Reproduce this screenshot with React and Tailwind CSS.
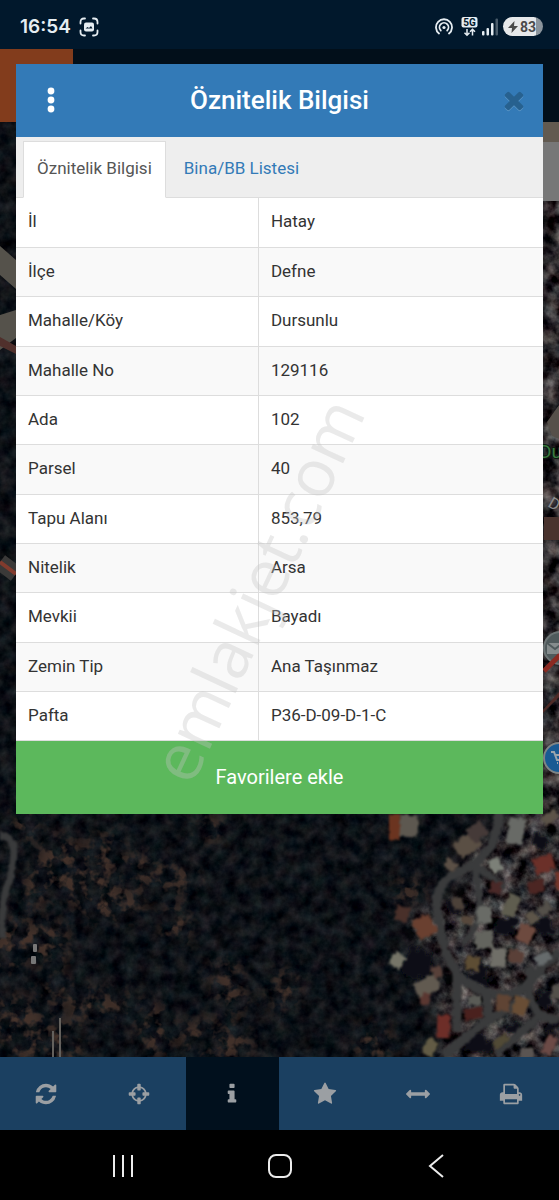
import React, { useState } from 'react';

const rows = [
  ['İl', 'Hatay'],
  ['İlçe', 'Defne'],
  ['Mahalle/Köy', 'Dursunlu'],
  ['Mahalle No', '129116'],
  ['Ada', '102'],
  ['Parsel', '40'],
  ['Tapu Alanı', '853,79'],
  ['Nitelik', 'Arsa'],
  ['Mevkii', 'Bayadı'],
  ['Zemin Tip', 'Ana Taşınmaz'],
  ['Pafta', 'P36-D-09-D-1-C'],
];

const tabs = ['Öznitelik Bilgisi', 'Bina/BB Listesi'];

const icons = {
  refresh: 'M1639 1056q0 5-1 7-64 268-268 434.5t-478 166.5q-146 0-282.5-55t-243.5-157l-129 129q-19 19-45 19t-45-19-19-45v-448q0-26 19-45t45-19h448q26 0 45 19t19 45-19 45l-137 137q71 66 161 102t187 36q134 0 250-65t186-179q11-17 53-117 8-23 30-23h192q13 0 22.5 9.5t9.5 22.5zm25-800v448q0 26-19 45t-45 19h-448q-26 0-45-19t-19-45 19-45l138-138q-148-137-349-137-134 0-250 65t-186 179q-11 17-53 117-8 23-30 23h-199q-13 0-22.5-9.5t-9.5-22.5v-7q65-268 270-434.5t480-166.5q146 0 284 55.5t245 156.5l130-129q19-19 45-19t45 19 19 45z',
  crosshairs: 'M1325 1024h-109q-26 0-45-19t-19-45v-128q0-26 19-45t45-19h109q-32-108-112.5-188.5t-188.5-112.5v109q0 26-19 45t-45 19h-128q-26 0-45-19t-19-45v-109q-108 32-188.5 112.5t-112.5 188.5h109q26 0 45 19t19 45v128q0 26-19 45t-45 19h-109q32 108 112.5 188.5t188.5 112.5v-109q0-26 19-45t45-19h128q26 0 45 19t19 45v109q108-32 188.5-112.5t112.5-188.5zm339-192v128q0 26-19 45t-45 19h-143q-37 161-154.5 278.5t-278.5 154.5v143q0 26-19 45t-45 19h-128q-26 0-45-19t-19-45v-143q-161-37-278.5-154.5t-154.5-278.5h-143q-26 0-45-19t-19-45v-128q0-26 19-45t45-19h143q37-161 154.5-278.5t278.5-154.5v-143q0-26 19-45t45-19h128q26 0 45 19t19 45v143q161 37 278.5 154.5t154.5 278.5h143q26 0 45 19t19 45z',
  info: 'M1216 1344v128q0 26-19 45t-45 19h-512q-26 0-45-19t-19-45v-128q0-26 19-45t45-19h64v-384h-64q-26 0-45-19t-19-45v-128q0-26 19-45t45-19h384q26 0 45 19t19 45v576h64q26 0 45 19t19 45zm-128-1152v192q0 26-19 45t-45 19h-256q-26 0-45-19t-19-45v-192q0-26 19-45t45-19h256q26 0 45 19t19 45z',
  star: 'M1728 647q0 22-26 48l-363 354 86 500q1 7 1 20 0 21-10.5 35.5t-30.5 14.5q-19 0-40-12l-449-236-449 236q-22 12-40 12-21 0-31.5-14.5t-10.5-35.5q0-6 2-20l86-500-364-354q-25-27-25-48 0-37 56-46l502-73 225-455q19-41 49-41t49 41l225 455 502 73q56 9 56 46z',
  arrows: 'M1792 896q0 26-19 45l-256 256q-19 19-45 19t-45-19-19-45v-128h-1024v128q0 26-19 45t-45 19-45-19l-256-256q-19-19-19-45t19-45l256-256q19-19 45-19t45 19 19 45v128h1024v-128q0-26 19-45t45-19 45 19l256 256q19 19 19 45z',
  print: 'M448 1536h896v-256h-896v256zm0-640h896v-384h-160q-40 0-68-28t-28-68v-160h-640v640zm1152 64q0-26-19-45t-45-19-45 19-19 45 19 45 45 19 45-19 19-45zm128 0v416q0 13-9.5 22.5t-22.5 9.5h-224v160q0 40-28 68t-68 28h-960q-40 0-68-28t-28-68v-160h-224q-13 0-22.5-9.5t-9.5-22.5v-416q0-79 56.5-135.5t135.5-56.5h64v-544q0-40 28-68t68-28h672q40 0 88 20t76 48l152 152q28 28 48 76t20 88v256h64q79 0 135.5 56.5t56.5 135.5z',
  close: 'M1490 1322q0 40-28 68l-136 136q-28 28-68 28t-68-28l-294-294-294 294q-28 28-68 28t-68-28l-136-136q-28-28-28-68t28-68l294-294-294-294q-28-28-28-68t28-68l136-136q28-28 68-28t68 28l294 294 294-294q28-28 68-28t68 28l136 136q28 28 28 68t-28 68l-294 294 294 294q28 28 28 68z',
};

const tools = [
  { icon: 'refresh', label: 'Yenile' },
  { icon: 'crosshairs', label: 'Konum' },
  { icon: 'info', label: 'Bilgi' },
  { icon: 'star', label: 'Favoriler' },
  { icon: 'arrows', label: 'Ölçüm' },
  { icon: 'print', label: 'Yazdır' },
];

const Icon = ({ name, className }) => (
  <svg viewBox="0 0 1792 1792" fill="currentColor" className={className} aria-hidden="true">
    <path d={icons[name]} />
  </svg>
);

// x, y, width, height, angle, colour
const houses = [
  [389, 814, 11, 26, 0, '#6b3420'], [400, 815, 18, 22, 4, '#5d5850'],
  [455, 836, 24, 18, -35, '#5a4f44'], [468, 824, 18, 16, -35, '#453a38'],
  [444, 860, 14, 10, 40, '#5b5046'], [508, 818, 16, 26, 8, '#686a66'],
  [490, 858, 11, 14, -30, '#7c8078'], [534, 856, 20, 16, -18, '#6b3029'],
  [528, 880, 16, 13, -15, '#4c2623'], [556, 872, 10, 18, 0, '#74352a'],
  [542, 812, 16, 10, -30, '#5c5348'], [505, 894, 13, 23, 22, '#5f5d4f'],
  [490, 882, 11, 12, 10, '#4a2928'], [477, 906, 15, 17, 0, '#696b66'],
  [475, 931, 18, 18, -6, '#63645e'], [491, 948, 15, 19, 4, '#706f68'],
  [415, 916, 19, 21, -25, '#6a4030'], [396, 906, 13, 15, 15, '#49302a'],
  [391, 953, 13, 15, 35, '#767568'], [518, 925, 15, 18, 22, '#6d4a3f'],
  [508, 950, 15, 12, 10, '#5a4038'], [535, 953, 16, 11, -35, '#666b6c'],
  [415, 978, 24, 16, -28, '#615a50'], [432, 966, 10, 12, -20, '#574039'],
  [421, 993, 9, 12, 14, '#5a3731'], [468, 996, 13, 9, 0, '#5a5b56'],
  [464, 1008, 18, 11, -10, '#4a211e'], [437, 1015, 13, 23, 3, '#6d2e28'],
  [424, 1039, 12, 17, 30, '#625b45'], [496, 995, 14, 16, 12, '#5f4434'],
  [513, 997, 14, 18, 20, '#684d35'], [493, 1037, 16, 8, -35, '#514a36'],
  [544, 1035, 11, 20, 24, '#6b4a46'], [521, 1048, 13, 10, 0, '#5b5552'],
  [538, 905, 14, 10, -40, '#54504a'], [552, 985, 11, 14, 10, '#54504a'],
  [527, 912, 10, 11, -30, '#5d5549'], [466, 956, 14, 14, 10, '#5d4d34'],
  [453, 898, 10, 12, -10, '#4c4139'], [461, 917, 12, 7, 8, '#57483c'],
];

const clearings = [
  [24, 824, 6, 7], [105, 848, 11, 7], [142, 868, 10, 9], [92, 880, 16, 15], [50, 872, 14, 10],
  [77, 886, 10, 11], [60, 850, 12, 6], [124, 905, 14, 7], [100, 905, 9, 9], [32, 894, 8, 6],
  [178, 879, 14, 6], [209, 828, 7, 6], [177, 924, 7, 12], [52, 945, 9, 17], [22, 940, 14, 13],
  [5, 950, 10, 16], [225, 974, 10, 6], [120, 1005, 8, 6], [57, 992, 9, 6], [90, 1004, 10, 9],
  [154, 1030, 8, 20], [220, 1044, 28, 9], [12, 1022, 24, 18], [32, 1042, 19, 13], [66, 1042, 10, 14],
  [200, 1036, 12, 9], [233, 1001, 8, 7], [374, 1045, 10, 14], [284, 990, 7, 14], [410, 892, 12, 5],
];

// Dimmed satellite picture under the dialog
const SatelliteMap = () => (
  <svg
    viewBox="0 122 559 935"
    preserveAspectRatio="xMidYMid slice"
    className="absolute inset-0 h-full w-full"
    aria-hidden="true"
  >
    <defs>
      <filter id="canopy" x="0" y="0" width="100%" height="100%" colorInterpolationFilters="sRGB">
        <feTurbulence type="fractalNoise" baseFrequency="0.08" numOctaves="4" seed="8" />
        <feColorMatrix values="0.22 0.08 0 0 -0.1  0.22 0 0 0 -0.045  0.2 0 0.04 0 -0.035  0 0 0 0 1" />
      </filter>
      <filter id="soil" x="0" y="0" width="100%" height="100%" colorInterpolationFilters="sRGB">
        <feTurbulence type="fractalNoise" baseFrequency="0.08" numOctaves="3" seed="15" />
        <feColorMatrix values="0 0 0 0 0.27  0 0 0 0 0.2  0 0 0 0 0.17  5 0 0 0 -2.4" />
      </filter>
      <filter id="rubble" x="0" y="0" width="100%" height="100%" colorInterpolationFilters="sRGB">
        <feTurbulence type="fractalNoise" baseFrequency="0.07" numOctaves="4" seed="21" />
        <feColorMatrix values="0.8 0.1 0 0 -0.27  0.8 0 0 0 -0.235  0.75 0 0.05 0 -0.225  0 0 0 0 1" />
      </filter>
      <filter id="rough" x="-10%" y="-10%" width="120%" height="120%">
        <feTurbulence type="fractalNoise" baseFrequency="0.12" numOctaves="3" seed="4" result="n" />
        <feDisplacementMap in="SourceGraphic" in2="n" scale="22" xChannelSelector="R" yChannelSelector="G" />
        <feGaussianBlur stdDeviation="0.8" />
      </filter>
      <filter id="edges" x="-10%" y="-10%" width="120%" height="120%" colorInterpolationFilters="sRGB">
        <feTurbulence type="fractalNoise" baseFrequency="0.2" numOctaves="2" seed="2" result="n" />
        <feDisplacementMap in="SourceGraphic" in2="n" scale="5" xChannelSelector="R" yChannelSelector="G" />
        <feGaussianBlur stdDeviation="0.8" />
      </filter>
      <filter id="soft" x="-20%" y="-20%" width="140%" height="140%">
        <feGaussianBlur stdDeviation="9" />
      </filter>
      <mask id="clearingMask" maskUnits="userSpaceOnUse" x="0" y="122" width="559" height="935">
        <g filter="url(#soft)" fill="#fff">
          {clearings.map(([x, y, rx, ry]) => (
            <ellipse key={x + '-' + y} cx={x} cy={y} rx={rx + 9} ry={ry + 9} />
          ))}
        </g>
      </mask>
      <mask id="townMask" maskUnits="userSpaceOnUse" x="380" y="122" width="179" height="935">
        <path
          d="M535 100h60v980H432l12-60-15-25 22-20-20-20-28-22 10-25 35-10 20-20-12-20 30-25 45-30z"
          fill="#fff"
          filter="url(#soft)"
        />
      </mask>
    </defs>

    <rect x="0" y="122" width="559" height="935" filter="url(#canopy)" />
    <g mask="url(#clearingMask)">
      <rect x="0" y="122" width="559" height="935" filter="url(#soil)" />
    </g>
    <g mask="url(#townMask)">
      <rect x="380" y="122" width="179" height="935" filter="url(#rubble)" />
    </g>

    {/* trees between the houses */}
    <g filter="url(#rough)" fill="#0a1117">
      <ellipse cx="418" cy="965" rx="15" ry="16" />
      <ellipse cx="506" cy="926" rx="12" ry="10" />
      <ellipse cx="456" cy="907" rx="10" ry="9" />
      <ellipse cx="480" cy="976" rx="9" ry="12" />
      <ellipse cx="477" cy="1045" rx="18" ry="9" />
      <ellipse cx="545" cy="927" rx="10" ry="8" />
      <ellipse cx="540" cy="843" rx="9" ry="9" />
      <ellipse cx="515" cy="1028" rx="8" ry="7" />
      <ellipse cx="545" cy="998" rx="9" ry="9" />
      <ellipse cx="551" cy="1028" rx="8" ry="6" />
    </g>

    <g filter="url(#edges)" fill="none" stroke="#3a3b3c" strokeWidth="9">
      <path d="M0 835q12 1 14 16q-1 25-8 38q-5 22-4 50" strokeWidth="7" />
      <path d="M499 812q-2 24-10 37l-14 16q-36 12-38 33q-1 20 9 55l13 25l25 14l22 4q22-6 33-26l20-18" />
      <path d="M475 866l4 30l1 20M475 866l20 14l10 8" strokeWidth="7" />
      <path d="M457 976l0 56M487 988l1 30M443 1056l44-35l35-20" />
      <path d="M530 966l-1 30q5 14 13 20l17 5M542 1014l-46 40" strokeWidth="8" />
      <path d="M462 945q14-14 18-32" strokeWidth="6" />
    </g>

    <g filter="url(#edges)">
      {houses.map(([x, y, w, h, a, fill]) => (
        <rect
          key={x + '-' + y}
          x={x}
          y={y}
          width={w}
          height={h}
          fill={fill}
          transform={`rotate(${a} ${x + w / 2} ${y + h / 2})`}
        />
      ))}
    </g>
    <rect x="33" y="944" width="4" height="8" rx="1" fill="#777" />
    <rect x="31" y="956" width="5" height="8" rx="1" fill="#777" />
    <path d="M53 1031v26M60 1018v39" stroke="#63605c" strokeWidth="2" />
    <path d="M0 246l16 14v29l-16-14z" fill="#55524b" />
    <path d="M0 315l16-5v28l-16 12z" fill="#55524b" />
    <path d="M0 337l16 9v8l-16-8z" fill="#50302c" />
    <path d="M0 562l16 12" stroke="#3a3938" strokeWidth="17" />
    <path d="M0 562l16 12" stroke="#823b2d" strokeWidth="4" />
    <g>
      <rect x="543" y="122" width="16" height="20" fill="#625a50" />
      <path d="M559 405l-12 17 5 14 7 3z" fill="#56504a" />
      <rect x="544" y="517" width="15" height="23" fill="#49332e" />
      <path d="M543 710l16-18v5l-16 16z" fill="#4f2b27" />
    </g>
    <rect x="543" y="142" width="16" height="59" fill="#777" />

    <text x="539" y="458" fontSize="19" fontFamily="Roboto, sans-serif" fill="#3a7a40" stroke="#0c1a10" strokeWidth="2" paintOrder="stroke">Du</text>
    <text x="547" y="506" fontSize="16" fontFamily="Roboto, sans-serif" fill="#8b8b8b" transform="rotate(30 547 506)">D</text>

    <circle cx="560" cy="648" r="16" fill="#4f5a5c" stroke="#6c7475" strokeWidth="2" />
    <rect x="547" y="643" width="16" height="11" fill="#858c8d" />
    <path d="M547 643l8 6 8-6" fill="none" stroke="#4f5a5c" strokeWidth="2" />
    <path d="M544 671l16-16" stroke="#8b2a22" strokeWidth="5" />
    <circle cx="559" cy="758" r="15" fill="#185a93" stroke="#7f8586" strokeWidth="2" />
    <path d="M551 752h3l3 8h6M555 755h8M557 763h1" fill="none" stroke="#9aa5ac" strokeWidth="2" />
  </svg>
);

const StatusBar = () => (
  <div className="flex h-[49px] items-center bg-[#01182c] pt-1 pr-4 pl-5 text-[#e6edf2]">
    <span className="font-['Inter',sans-serif] text-[19px] leading-6 font-semibold">16:54</span>
    <svg viewBox="0 0 20 20" className="ml-2 h-5 w-5" fill="none" stroke="currentColor" strokeWidth="1.800" strokeLinecap="round" aria-hidden="true">
      <path d="M1.500 6.500V5q0-3.500 3.500-3.500h1M14 1.500h1q3.500 0 3.500 3.500v1.500M18.500 13.500V15q0 3.500-3.500 3.500h-1M6 18.500H5q-3.500 0-3.500-3.500v-1.500" />
      <rect x="5" y="5.500" width="10" height="9" rx="2" fill="currentColor" stroke="none" />
      <path d="M6.500 11.500l2-1.500 1.500 1 2-2 1.500 2.500z" fill="#01182c" stroke="none" />
    </svg>
    <div className="ml-auto flex items-center">
      <svg viewBox="0 0 18 18" className="h-[18px] w-[18px]" fill="none" stroke="currentColor" strokeWidth="1.800" strokeLinecap="round" aria-hidden="true">
        <path d="M4 15.500a8 8 0 1 1 10 0" />
        <path d="M5.800 12.500a4.500 4.500 0 1 1 6.400 0" />
        <circle cx="9" cy="9.500" r="1.600" fill="currentColor" stroke="none" />
      </svg>
      <svg viewBox="0 0 17 20" className="ml-2 h-5 w-[17px]" aria-hidden="true">
        <rect x="0.500" y="0" width="16" height="10.500" rx="2" fill="#e6edf2" />
        <text x="8.500" y="8.800" textAnchor="middle" fontSize="10" fontWeight="700" fontFamily="Roboto, sans-serif" fill="#01182c">5G</text>
        <path d="M6 12v6M3.500 15.800L6 18.200l2.500-2.400M11.500 18.500v-6M9 14.700l2.500-2.400 2.500 2.400" fill="none" stroke="#e6edf2" strokeWidth="1.500" />
      </svg>
      <svg viewBox="0 0 17 18" className="ml-1 h-[18px] w-[17px]" fill="currentColor" aria-hidden="true">
        <rect x="0" y="13" width="2.500" height="4.500" rx="1" />
        <rect x="4.500" y="10" width="2.500" height="7.500" rx="1" />
        <rect x="9" y="5" width="2.500" height="12.500" rx="1" />
        <rect x="13.500" y="0.500" width="2.500" height="17" rx="1" fill="#4a5c6b" />
      </svg>
      <span className="ml-1 flex h-[19px] w-10 items-center gap-px rounded-full bg-linear-to-r from-[#e6e8ea] from-82% to-[#8b949c] to-82% pl-1 text-sm leading-4 font-bold text-[#4a4a4a]">
        <svg viewBox="0 0 12 12" className="h-3 w-3" fill="currentColor" aria-hidden="true">
          <path d="M7.500 0L1 7h4l-.5 5L11 5H7z" />
        </svg>
        83
      </span>
    </div>
  </div>
);

const App = () => {
  const [activeTab, setActiveTab] = useState(0);
  const [open, setOpen] = useState(true);

  return (
    <div className="relative flex min-h-screen flex-col overflow-hidden bg-black font-['Roboto',sans-serif]">
      <StatusBar />
      <header className="flex h-[73px] bg-[#020f1a]">
        <div className="w-[73px] bg-[#823c1c]" />
      </header>

      <main className="relative flex-1">
        <SatelliteMap />
      </main>

      <nav className="grid h-[73px] grid-cols-6 bg-[#1b4061] text-[#9b9fa3]">
        {tools.map(tool => (
          <button
            key={tool.icon}
            type="button"
            aria-label={tool.label}
            className={'flex items-center justify-center pr-0.5 ' + (tool.icon === 'info' ? 'bg-[#01101d]' : '')}
          >
            <Icon name={tool.icon} className="h-6 w-6" />
          </button>
        ))}
      </nav>

      <div className="flex h-[70px] items-center justify-around bg-black px-11 pt-0.5 text-[#ececec]">
        <button type="button" aria-label="Son uygulamalar">
          <svg viewBox="0 0 24 24" className="h-6 w-6" stroke="currentColor" strokeWidth="2" aria-hidden="true">
            <path d="M3 1v22M12 1v22M21 1v22" />
          </svg>
        </button>
        <button type="button" aria-label="Ana ekran">
          <svg viewBox="0 0 24 24" className="h-6 w-6" fill="none" stroke="currentColor" strokeWidth="2" aria-hidden="true">
            <rect x="1" y="1" width="22" height="22" rx="7" />
          </svg>
        </button>
        <button type="button" aria-label="Geri">
          <svg viewBox="0 0 24 24" className="h-6 w-6" fill="none" stroke="currentColor" strokeWidth="2" aria-hidden="true">
            <path d="M18 1L5 12l13 11" />
          </svg>
        </button>
      </div>

      {open && (
        <section role="dialog" aria-labelledby="dialog-title" className="absolute inset-x-4 top-16 bg-white">
          <div className="flex h-[73px] items-center justify-between bg-[#337ab7] px-[15px] pb-0.5 text-white">
            <button type="button" aria-label="Menü" className="flex h-10 w-10 items-center justify-center">
              <svg viewBox="0 0 8 26" className="h-[26px] w-2" fill="currentColor" aria-hidden="true">
                <circle cx="4" cy="4" r="3.400" />
                <circle cx="4" cy="13" r="3.400" />
                <circle cx="4" cy="22" r="3.400" />
              </svg>
            </button>
            <h1 id="dialog-title" className="text-[26px] leading-8 font-medium">Öznitelik Bilgisi</h1>
            <button
              type="button"
              aria-label="Kapat"
              onClick={() => setOpen(false)}
              className="flex h-10 w-10 items-center justify-end text-[#27618f] drop-shadow-[0_1px_0_#5a94c4]"
            >
              <Icon name="close" className="h-7 w-7" />
            </button>
          </div>

          <div role="tablist" className="flex h-[61px] border-b border-[#ddd] bg-[#eee] px-[7px] pt-1">
            {tabs.map((tab, i) => (
              <button
                key={tab}
                type="button"
                role="tab"
                aria-selected={activeTab === i}
                onClick={() => setActiveTab(i)}
                className={
                  'mr-1 -mb-px border px-[13px] pb-1 text-[17px] leading-6 ' +
                  (activeTab === i ? 'border-[#ddd] border-b-white bg-white text-[#555]' : 'border-transparent text-[#337ab7]')
                }
              >
                {tab}
              </button>
            ))}
          </div>

          <table className="w-full table-fixed border-collapse text-[17px] leading-6 text-[#333]">
            <tbody>
              {rows.map(([label, value]) => (
                <tr key={label} className="h-[49px] even:bg-[#f9f9f9] nth-[3n]:h-[50px]">
                  <th scope="row" className="w-[46%] border-r border-b border-[#ddd] px-3 pb-0.5 text-left font-normal">{label}</th>
                  <td className="border-b border-[#ddd] px-3 pb-0.5">{value}</td>
                </tr>
              ))}
            </tbody>
          </table>

          <button type="button" className="block h-[73px] w-full bg-[#5cb85c] text-xl text-white">
            Favorilere ekle
          </button>
        </section>
      )}

      <div className="pointer-events-none absolute inset-x-4 top-16 flex h-[1050px] items-center justify-center pr-12">
        <span className="-rotate-65 font-['Open_Sans',sans-serif] text-[66px] leading-none font-medium text-[#c4c4c4]/35">emlakjet.com</span>
      </div>
    </div>
  );
};

export default App;
